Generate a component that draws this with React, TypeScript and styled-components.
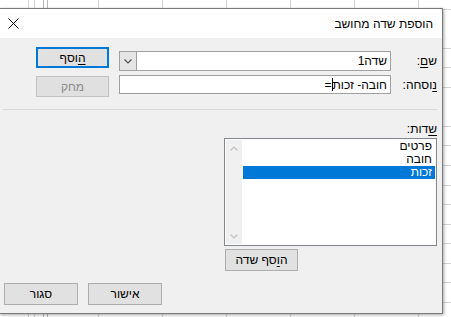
import React from "react";
import styled, { createGlobalStyle } from "styled-components";

const GlobalStyle = createGlobalStyle`
  html, body {
    margin: 0;
    padding: 0;
  }
  body {
    font-family: "Liberation Sans", "DejaVu Sans", sans-serif;
    font-size: 12px;
    color: #000;
  }
`;

const Desktop = styled.div`
  position: relative;
  width: 451px;
  height: 317px;
  overflow: hidden;
  background-color: #fff;
  background-image:
    linear-gradient(90deg, transparent 28px, #d4d4d4 28px 29px, transparent 29px),
    linear-gradient(90deg, transparent 43px, #b8b8b8 43px 44px, transparent 44px 47px, #b8b8b8 47px 48px, transparent 48px),
    repeating-linear-gradient(90deg, transparent 0 34px, #d4d4d4 34px 35px, transparent 35px 64px),
    repeating-linear-gradient(180deg, transparent 0 9px, #d4d4d4 9px 10px, transparent 10px 19.5px);
`;

const Dialog = styled.div`
  position: absolute;
  left: -1px;
  top: 8px;
  width: 444px;
  height: 306px;
  box-sizing: border-box;
  border: 1px solid #7a7a7a;
  background: #f0f0f0;
  box-shadow: 1px 1px 3px rgba(0, 0, 0, 0.35);
  display: flex;
  flex-direction: column;
`;

const TitleBar = styled.div`
  height: 29px;
  flex: none;
  background: #fff;
  display: flex;
  align-items: center;
  justify-content: space-between;
  padding: 0 9px 0 8px;
`;

const Title = styled.div`
  direction: rtl;
  font-size: 12px;
`;

const Body = styled.div`
  flex: 1;
  direction: rtl;
  display: flex;
  flex-direction: column;
  padding: 0 5px 7px 4px;
`;

const TopSection = styled.div`
  display: flex;
  align-items: flex-start;
`;

const FormGrid = styled.div`
  display: grid;
  grid-template-columns: 46px 272px;
  grid-template-rows: 20px 19px;
  row-gap: 4px;
  margin-top: 13px;
`;

const Label = styled.label`
  display: flex;
  align-items: center;
  white-space: nowrap;
  u {
    text-decoration: underline;
    text-underline-offset: 2px;
  }
`;

const ButtonColumn = styled.div`
  display: flex;
  flex-direction: column;
  gap: 8px;
  margin-top: 9px;
  margin-right: 10px;
`;

const Button = styled.button<{ $primary?: boolean; $w?: number; $h?: number }>`
  box-sizing: border-box;
  width: ${({ $w }) => $w || 73}px;
  height: ${({ $h }) => $h || 22}px;
  padding: 0;
  font-family: inherit;
  font-size: 12px;
  direction: rtl;
  color: #000;
  background: #e1e1e1;
  border: ${({ $primary }) => ($primary ? "2px solid #0078d7" : "1px solid #adadad")};
  &:disabled {
    color: #8a8a8a;
    background: #e0e0e0;
    border-color: #c2c2c2;
  }
  u {
    text-underline-offset: 2px;
  }
`;

const Combo = styled.div`
  box-sizing: border-box;
  display: flex;
  direction: ltr;
  border: 1px solid #a0a0a0;
  background: #fff;
  height: 20px;
`;

const ComboArrow = styled.div`
  box-sizing: border-box;
  width: 17px;
  height: 18px;
  flex: none;
  background: #e5e5e5;
  border-right: 1px solid #a0a0a0;
  display: flex;
  align-items: center;
  justify-content: center;
`;

const ComboText = styled.div`
  flex: 1;
  direction: rtl;
  display: flex;
  align-items: center;
  padding-right: 3px;
`;

const TextInput = styled.div`
  box-sizing: border-box;
  border: 1px solid #a0a0a0;
  background: #fff;
  height: 19px;
  display: flex;
  align-items: center;
  padding-right: 3px;
  white-space: pre;
`;

const Caret = styled.span`
  display: inline-block;
  width: 1px;
  height: 13px;
  background: #000;
  vertical-align: middle;
`;

const Separator = styled.div`
  height: 1px;
  background: #d9d9d9;
  margin: 12px 0 0 0;
  width: 434px;
`;

const FieldsLabel = styled(Label)`
  height: 14px;
  margin-top: 12px;
`;

const FieldsSection = styled.div`
  align-self: flex-start;
  width: 213px;
  display: flex;
  flex-direction: column;
`;

const ListBox = styled.div`
  box-sizing: border-box;
  width: 213px;
  height: 108px;
  margin-top: 2px;
  border: 1px solid #828790;
  background: #fff;
  padding: 1px;
  display: flex;
`;

const ListItems = styled.div`
  flex: 1;
`;

const ListItem = styled.div<{ $selected?: boolean }>`
  height: 13px;
  line-height: 13px;
  padding-right: 3px;
  margin-left: 1px;
  background: ${({ $selected }) => ($selected ? "#0078d7" : "transparent")};
  color: ${({ $selected }) => ($selected ? "#fff" : "#000")};
`;

const ScrollBar = styled.div`
  width: 16px;
  flex: none;
  background: #f0f0f0;
  display: flex;
  flex-direction: column;
  justify-content: space-between;
  align-items: center;
  padding: 6px 0 5px;
`;

const AddFieldButton = styled(Button)`
  align-self: flex-end;
  margin: 3px 0 0 1px;
`;

const BottomRow = styled.div`
  direction: ltr;
  display: flex;
  gap: 10px;
  margin-top: 12px;
`;

const Chevron = ({ up, color }: { up?: boolean; color: string }) => (
  <svg width="8" height="5" viewBox="0 0 8 5">
    <path
      d={up ? "M0.5 4.5 L4 1 L7.5 4.5" : "M0.5 0.5 L4 4 L7.5 0.5"}
      fill="none"
      stroke={color}
      strokeWidth="1.2"
    />
  </svg>
);

const CloseIcon = () => (
  <svg width="11" height="11" viewBox="0 0 11 11">
    <path d="M0.5 0.5 L10.5 10.5 M10.5 0.5 L0.5 10.5" stroke="#000" strokeWidth="1" />
  </svg>
);

const fields = ["פרטים", "חובה", "זכות"];

const App: React.FC = () => {
  return (
    <Desktop>
      <GlobalStyle />
      <Dialog>
        <TitleBar>
          <CloseIcon />
          <Title>הוספת שדה מחושב</Title>
        </TitleBar>
        <Body>
          <TopSection>
            <FormGrid>
              <Label>
                ש<u>ם</u>:
              </Label>
              <Combo>
                <ComboArrow>
                  <Chevron color="#555" />
                </ComboArrow>
                <ComboText>שדה1</ComboText>
              </Combo>
              <Label>
                <u>נ</u>וסחה:
              </Label>
              <TextInput>
                חובה- זכות<Caret />=
              </TextInput>
            </FormGrid>
            <ButtonColumn>
              <Button $primary $h={21}>
                <u>ה</u>וסף
              </Button>
              <Button disabled $h={21}>
                מחק
              </Button>
            </ButtonColumn>
          </TopSection>
          <Separator />
          <FieldsLabel>
            <u>ש</u>דות:
          </FieldsLabel>
          <FieldsSection>
            <ListBox>
              <ListItems>
                {fields.map((f, i) => (
                  <ListItem key={f} $selected={i === 2}>
                    {f}
                  </ListItem>
                ))}
              </ListItems>
              <ScrollBar>
                <Chevron up color="#c0c0c0" />
                <Chevron color="#c0c0c0" />
              </ScrollBar>
            </ListBox>
            <AddFieldButton>
              ה<u>ו</u>סף שדה
            </AddFieldButton>
          </FieldsSection>
          <BottomRow>
            <Button $w={74}>סגור</Button>
            <Button $w={74}>אישור</Button>
          </BottomRow>
        </Body>
      </Dialog>
    </Desktop>
  );
};

export default App;
